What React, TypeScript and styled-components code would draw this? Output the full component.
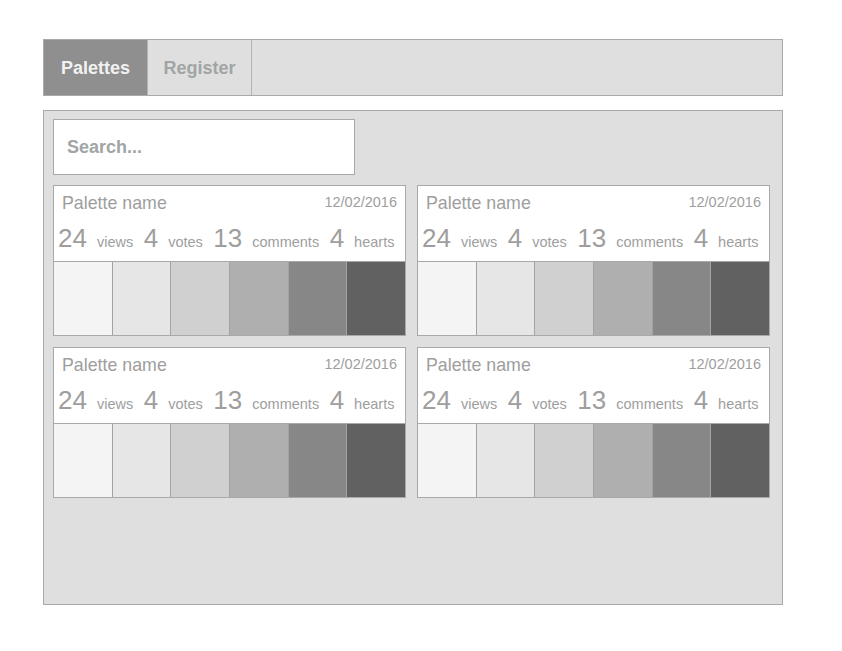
import React from "react";
import styled, { createGlobalStyle } from "styled-components";

const GlobalStyle = createGlobalStyle`
  html, body {
    margin: 0;
    padding: 0;
    background: #ffffff;
    font-family: "Liberation Sans", Arial, sans-serif;
  }
  * { box-sizing: border-box; }
`;

const Page = styled.div`
  padding: 39px 0 0 43px;
  display: flex;
  flex-direction: column;
  gap: 14px;
`;

const NavBar = styled.nav`
  width: 740px;
  height: 57px;
  display: flex;
  background: #dfdfdf;
  border: 1px solid #a9a9a9;
`;

const Tab = styled.div<{ $active?: boolean }>`
  width: 104px;
  display: flex;
  align-items: center;
  justify-content: center;
  padding-top: 2px;
  font-size: 18px;
  font-weight: bold;
  color: ${(p) => (p.$active ? "#f2f2f2" : "#a1a5a5")};
  background: ${(p) => (p.$active ? "#8f8f8f" : "#dfdfdf")};
  border-right: 1px solid #b3b3b3;
`;

const Panel = styled.main`
  width: 740px;
  height: 495px;
  background: #dfdfdf;
  border: 1px solid #a9a9a9;
  padding: 8px 0 0 9px;
  display: flex;
  flex-direction: column;
  gap: 10px;
`;

const SearchBox = styled.div`
  width: 302px;
  height: 56px;
  background: #ffffff;
  border: 1px solid #a9a9a9;
  display: flex;
  align-items: center;
  padding-left: 13px;
  font-size: 18px;
  font-weight: bold;
  color: #a1a5a5;
`;

const Grid = styled.div`
  display: grid;
  grid-template-columns: 353px 353px;
  column-gap: 11px;
  row-gap: 11px;
`;

const Card = styled.div`
  height: 151px;
  background: #ffffff;
  border: 1px solid #a9a9a9;
  display: flex;
  flex-direction: column;
`;

const CardHeader = styled.div`
  height: 75px;
  padding: 9px 8px 0 4px;
  display: flex;
  flex-direction: column;
  color: #9e9e9e;
`;

const TitleRow = styled.div`
  display: flex;
  justify-content: space-between;
  align-items: flex-start;
  padding-left: 4px;
`;

const Name = styled.span`
  font-size: 17.8px;
  line-height: 1;
`;

const DateText = styled.span`
  font-size: 14.5px;
  line-height: 1;
`;

const Stats = styled.div`
  margin-top: 12px;
  display: flex;
  align-items: baseline;
  gap: 10.5px;
  white-space: nowrap;
`;

const Stat = styled.span`
  display: inline-flex;
  align-items: baseline;
  gap: 10px;
`;

const Num = styled.span`
  font-size: 26px;
  line-height: 1;
`;

const Label = styled.span`
  font-size: 14.5px;
  line-height: 1;
`;

const Swatches = styled.div`
  flex: 1;
  display: flex;
  border-top: 1px solid #a9a9a9;
`;

const Swatch = styled.div<{ $c: string }>`
  flex: 1;
  background: ${(p) => p.$c};
  & + & {
    border-left: 1px solid #a3a3a3;
  }
`;

const colors = ["#f4f4f4", "#e6e6e6", "#d0d0d0", "#afafaf", "#878787", "#616161"];

const stats: [string, string][] = [
  ["24", "views"],
  ["4", "votes"],
  ["13", "comments"],
  ["4", "hearts"],
];

function PaletteCard() {
  return (
    <Card>
      <CardHeader>
        <TitleRow>
          <Name>Palette name</Name>
          <DateText>12/02/2016</DateText>
        </TitleRow>
        <Stats>
          {stats.map(([n, l]) => (
            <Stat key={l}>
              <Num>{n}</Num>
              <Label>{l}</Label>
            </Stat>
          ))}
        </Stats>
      </CardHeader>
      <Swatches>
        {colors.map((c) => (
          <Swatch key={c} $c={c} />
        ))}
      </Swatches>
    </Card>
  );
}

export default function App() {
  return (
    <>
      <GlobalStyle />
      <Page>
        <NavBar>
          <Tab $active>Palettes</Tab>
          <Tab>Register</Tab>
        </NavBar>
        <Panel>
          <SearchBox>Search...</SearchBox>
          <Grid>
            <PaletteCard />
            <PaletteCard />
            <PaletteCard />
            <PaletteCard />
          </Grid>
        </Panel>
      </Page>
    </>
  );
}
